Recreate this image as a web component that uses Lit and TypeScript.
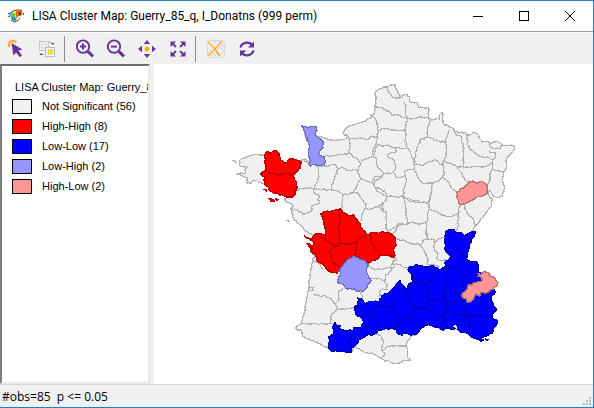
import { LitElement, html, css, svg } from "lit";
import { customElement } from "lit/decorators.js";

type Sheet = "A" | "B" | "C" | "D" | "E" | "F";
type Trace = [Sheet, string];
const ORIGIN: Record<Sheet, [number, number]> = {
  A: [675, 225],
  B: [1110, 225],
  C: [855, 600],
  D: [1170, 600],
  E: [855, 420],
  F: [1170, 420],
};

function points([sheet, text]: Trace): number[][] {
  const n = text.trim().split(/\s+/).map(Number);
  const [ox, oy] = ORIGIN[sheet];
  const out: number[][] = [];
  for (let i = 0; i + 1 < n.length; i += 2) out.push([ox + n[i], oy + n[i + 1]]);
  return out;
}

function wobble(a: number, b: number): number {
  const v = Math.sin(a * 12.9898 + b * 78.233) * 43758.5453;
  return (v - Math.floor(v) - 0.5) * 5;
}

/* Breaks long straight runs into the small steps of a surveyed border. */
function path(traces: Trace[], closed: boolean): string {
  const p = traces.flatMap(points);
  if (closed) p.push(p[0]);
  let d = `M${p[0][0]} ${p[0][1]}`;
  for (let i = 1; i < p.length; i++) {
    const [x0, y0] = p[i - 1];
    const [x1, y1] = p[i];
    const steps = Math.max(1, Math.round(Math.hypot(x1 - x0, y1 - y0) / 6));
    for (let k = 1; k < steps; k++) {
      const x = Math.round(x0 + ((x1 - x0) * k) / steps);
      const y = Math.round(y0 + ((y1 - y0) * k) / steps);
      d += `L${(x + wobble(x, y)).toFixed(1)} ${(y + wobble(y, x)).toFixed(1)}`;
    }
    d += `L${x1} ${y1}`;
  }
  return closed ? d + "Z" : d;
}

const lines = (sheet: Sheet, list: string[]): string =>
  list.map((t) => path([[sheet, t]], false)).join("");

const OUTLINE = path(
  [
    ["B", "75 28 78 40 84 52 90 62 86 70 96 68 104 58 112 58 118 66 120 80 132 84 142 84 146 98 162 99 174 97 178 104 176 112 176 124 178 130 188 135 208 132 209 118 216 113 220 120 218 134 222 150 236 154 250 160 256 170 266 174 284 172 290 178 300 180 310 172 322 177 328 190 338 202 354 198 362 206 382 200 398 210 412 212 426 210 433 217 426 232 416 242 408 260 408 280 400 292 397 310 402 330 402 350 396 364 382 368 368 360 360 346 354 352 358 366 368 374 364 384"],
    ["F", "304 194 294 210 286 222 272 238 268 246 258 256 252 262 248 276"],
    ["D", "256 96 254 106 244 118 238 140 232 160 230 178 246 184 262 188 264 204 264 216 272 220 290 216 300 224 312 234 324 248 322 256 310 266 316 276 304 290 304 300 312 318 320 330 308 342 308 356 322 362 320 376 310 386 308 400 290 408 274 412 262 418 250 414 240 408 226 398 210 396 196 386 186 390 172 384 160 390 148 384 130 380 116 374 100 382 88 392 80 402 64 408 56 420 50 434 52 460 54 474 62 480 40 482 22 490 2 488"],
    ["C", "306 480 300 484 290 474 276 468 262 460 240 458 222 446 206 440 200 456 180 456 160 454 140 454 130 440 120 440 100 430 80 422 62 414 52 408 50 394 32 386 34 380 48 370 52 360 60 320 68 280 72 250 78 210 82 180 90 168 76 154 80 140 88 130 82 112 92 104 70 98 58 90 50 78 38 70 28 60 22 46"],
    ["E", "24 224 18 208 24 200 16 190 4 186 0 176"],
    ["A", "186 368 206 364 190 366 176 362 160 356 144 352 132 344 124 332 118 324 108 322 90 316 82 318 78 326 66 324 66 308 56 304 36 298 48 294 62 296 60 282 68 278 44 270 44 256 50 250 72 244 92 238 104 240 118 242 124 230 134 234 144 228 154 228 162 236 166 248 172 258 180 264 188 258 196 250 206 252 216 256 228 258 238 252 246 262 256 258 252 244 250 226 252 208 246 196 240 180 236 162 230 152 240 154 252 158 262 154 274 156 276 166 270 176 280 190 286 184 300 190 320 194 340 196 358 194 370 184 358 180 354 172 366 158 382 150 402 144 422 138 438 128 446 118"],
    ["B", "14 110 16 90 17 50 28 42 48 36 62 30"],
  ],
  true
);

const BORDERS =
  lines("B", [
    "50 34 56 52 66 66 78 70 92 66",
    "16 96 30 98 44 104 60 112 66 122 82 120 100 128 112 130",
    "100 80 108 92 106 110 112 128",
    "112 130 130 130 150 126 176 128 180 140 172 160 170 186",
    "0 120 12 126 20 140 24 158 26 170 22 186 18 206",
    "26 164 50 160 70 164 90 166 106 162 108 180 104 200 112 216",
    "112 130 108 150 108 162",
    "22 186 10 184 0 186",
    "18 208 40 214 50 210 74 218 90 220 110 218",
    "18 208 10 222 10 240 20 256 22 276 40 292",
    "74 218 78 230 60 234 52 242 60 250 74 256 76 270 72 292",
    "40 292 56 294 72 294 78 306 94 306 106 304 104 290 116 284 130 284 134 272 130 252 122 236 112 218",
    "170 186 150 194 146 210 140 220 136 240 134 264",
    "170 186 190 192 206 200 228 200 232 180 236 166",
    "228 200 230 230 222 258 210 268 196 254 180 260 160 270 152 272 142 268 134 266",
    "222 260 240 264 260 274 280 276",
    "280 274 280 240 282 220 276 204 274 184 260 180 250 164",
    "290 178 292 200 298 222 312 232 330 244 352 246 368 256 376 246 376 234 360 232 358 226",
    "360 206 362 216 376 220 390 220 398 210",
    "262 276 280 276 300 278 320 274 340 276 360 270 368 258 368 282 386 288 398 292",
    "368 282 360 296 360 316 352 330",
    "262 280 272 290 278 304 290 320 300 320",
    "218 262 222 290 218 308 234 320 244 340 262 354",
    "218 308 202 320 190 324 160 326 152 320 140 300 132 284",
    "106 304 110 320 102 340 100 360 104 368 124 374 140 382 160 380 176 382 184 350 188 326",
    "40 292 36 306 16 316 12 330 20 350 36 356 50 364 70 364 84 368 100 360",
    "50 364 48 376 36 394 38 410",
  ]) +
  lines("E", [
    "120 48 140 48 160 44 192 40 196 22 190 -8",
    "190 -8 208 -3 224 -7 242 -1 260 -11 272 -8",
    "98 78 118 80 136 76 152 74 160 88 176 84 192 92 212 88 220 96",
    "192 40 204 50 220 58 228 70 220 84 218 96 224 112 240 122 262 128 268 112 290 108",
    "160 88 150 108 144 130 138 148",
    "98 78 102 110 96 128 88 146",
    "32 152 60 144 88 146 110 148 140 150 160 154 176 164 190 164 206 156 216 136 226 118",
    "48 60 60 58 70 64",
    "88 146 88 160 104 168 98 180 104 190 82 196 80 212 60 222 40 212 22 206",
    "176 164 172 180 170 206",
    "206 156 222 162 232 180 244 192 240 206 232 220 228 244",
    "240 206 256 208 272 200 290 206 304 216 304 250 306 278",
    "262 128 270 142 290 148 302 158 306 172 300 184 280 198 272 202",
    "228 60 248 56 264 50 272 24 280 12",
    "306 280 318 270 330 262 346 256",
  ]) +
  lines("F", [
    "36 170 46 174 60 184 80 182 96 188 116 188",
    "40 172 46 190 48 220 54 248",
    "116 188 118 206 112 220 114 236 108 246 90 252 70 246 54 252 34 252 20 256 14 276 0 282",
    "116 188 120 170 126 150",
    "118 206 136 214 154 226 174 230 196 224 206 220 206 204 214 194",
    "206 222 204 240 204 260 200 272",
    "222 194 228 210 236 226 248 234 252 252 262 254",
    "108 248 110 260 108 284 112 298 100 300",
  ]) +
  lines("D", [
    "20 116 40 120 60 130 88 134 100 148 108 160 114 178 112 194",
    "112 100 112 116 100 118 96 132 88 136",
    "14 166 20 180 8 186 14 200 0 206",
    "14 190 40 202 56 202",
    "112 116 130 118 136 126 156 112 164 112",
    "132 124 134 150 144 160 140 176 156 182 176 180",
    "110 194 136 196 150 200",
    "50 436 30 438 6 438",
  ]) +
  lines("C", [
    "250 200 270 208 300 206 320 196 328 180 326 166",
    "258 236 280 236 300 240 302 224 316 214 320 200",
    "284 290 282 276 292 266 306 268 300 240",
    "228 276 232 296",
    "82 180 100 188 112 206",
    "84 282 106 290 120 286 140 300 152 310 162 300 160 280 174 264",
    "72 262 84 262 84 272 70 272",
    "152 310 158 328 140 340 138 370 120 372 50 372",
    "158 328 184 326 206 324",
    "138 370 150 372",
    "270 400 290 410 296 430 290 450 300 460 288 474",
    "290 452 310 440 330 438",
  ]);

interface Cluster {
  kind: string;
  area: string;
  seams: string;
}

const CLUSTERS: Cluster[] = [
  {
    kind: "hh",
    area:
      path([["A", "118 242 124 230 134 234 144 228 154 228 162 236 166 248 172 258 180 264 188 258 196 250 206 252 216 256 228 260 226 280 214 290 206 300 208 310 214 320 216 340 210 358 206 364 190 366 176 362 160 356 144 352 132 344 124 332 118 320 120 308 108 300 108 294 120 290 122 270"]], true) +
      path([["A", "132 370 140 372 148 378 138 380"]], true) +
      path([["A", "151 371 160 374 156 378"]], true) +
      path([["A", "117 343 124 343 124 348"]], true) +
      path([["C", "106 42 120 36 140 32 152 30 166 26 172 36 184 40 190 48 206 44 212 56 222 68 230 84 242 96 244 104 256 98 280 100 296 96 316 100 330 112 334 136 324 150 330 166 320 172 306 166 286 166 268 180 250 190 240 180 230 178 222 170 206 168 198 176 182 180 172 200 160 214 156 222 140 218 124 206 110 190 94 178 90 162 76 154 80 140 88 130 82 112 92 100 104 102 120 106 120 80 116 64"]], true) +
      path([["C", "58 108 68 112 82 118 78 122 64 114"]], true) +
      path([["C", "66 130 76 134 84 148 74 142"]], true),
    seams:
      lines("A", ["120 290 140 296 160 300 180 296 196 300 206 304"]) +
      lines("C", [
        "162 30 166 60 160 80 162 110 168 130 150 140 132 126 112 112",
        "168 130 190 132 216 128 220 114 242 104",
        "150 138 134 154 138 170 140 186 160 196 168 206",
        "256 98 256 120 262 134 276 150 286 164",
        "216 128 214 144 206 168",
      ]),
  },
  {
    kind: "ll",
    area:
      path(
        [
          ["D", "166 96 176 88 190 88 196 96 210 96 224 106 240 98 248 94 256 96 254 106 244 118 238 140 232 160 230 178 246 184 262 188 264 204 264 216 276 222 290 240 304 262 316 276 304 290 304 300 312 318 320 330 308 342 308 356 322 362 320 376 310 386 308 400 290 408 274 412 262 418 250 414 240 408 226 398 210 396 202 388 204 378 196 374 184 378 196 386 186 390 172 384 160 390 148 384 130 380 116 374 100 382 88 392 80 402 64 406 44 400 36 406 20 398 18 388 0 386"],
          ["C", "300 386 280 392 270 402 250 404 240 410 222 420 214 432 200 444 200 456 180 456 160 454 140 454 130 438 134 424 132 410 148 398 144 380 150 366 156 376 166 378 166 390 184 392 200 392 206 384 222 384 236 368 228 352 214 346 208 322 220 314 218 294 230 296 238 310 260 304 284 306 290 288 306 280 326 262 334 252 345 242"],
          ["D", "42 262 50 266 58 250 70 248 66 236 66 222 54 208 60 200 80 194 100 200 130 198 150 208 166 198 166 184 176 180 184 170 166 150 164 120"],
        ],
        true
      ) +
      path([["D", "268 417 280 420 272 424"]], true) +
      path([["D", "286 416 296 418 292 422"]], true),
    seams:
      lines("D", [
        "176 178 190 158 206 152 216 158 230 178",
        "150 210 160 202 172 206 190 200 196 210 210 222 220 240 218 260",
        "172 206 166 230 168 260 162 290 166 304",
        "58 250 80 246 100 252 120 248 130 232 150 208",
        "110 252 116 270 108 290 116 300 140 300 166 302",
        "50 266 50 290 64 310 76 328 78 340 64 352 44 356 24 366 18 390",
        "76 328 90 324 110 326 116 298",
        "110 326 124 340 140 348 166 346 170 320 166 304 190 306 214 300",
        "166 346 164 366 150 380",
        "214 300 222 316 232 346",
        "170 320 190 340 230 346 250 350 280 346 310 346",
        "230 346 240 370 236 396",
      ]) +
      lines("C", [
        "284 306 276 320 262 340 270 348 266 360 280 376 270 400",
        "276 320 296 318 320 322 330 340 345 350",
        "232 346 250 340 262 340",
        "192 392 200 410 186 428 200 440",
        "150 390 166 390",
        "330 390 334 374 345 372",
      ]),
  },
  {
    kind: "lh",
    area:
      path([["A", "230 152 240 154 252 158 262 154 274 156 276 166 270 176 280 190 296 202 294 218 284 228 280 240 298 246 302 258 298 270 280 272 268 268 256 274 250 268 258 258 252 244 250 226 252 208 246 196 240 180 236 162"]], true) +
      path([["C", "172 200 184 182 198 176 206 168 214 172 224 178 240 182 250 194 244 210 250 226 258 240 248 256 238 272 220 274 208 266 188 268 174 254 158 248 160 230 168 222 160 214"]], true),
    seams: "",
  },
  {
    kind: "hl",
    area:
      path([["F", "200 160 210 148 220 144 236 128 248 122 262 130 272 124 286 130 292 138 292 160 280 166 262 170 250 178 236 186 220 192 210 194 204 180 200 172"]], true) +
      path([["D", "264 220 272 224 284 214 294 218 298 228 312 232 324 248 322 256 310 268 298 274 286 280 272 278 268 288 256 282 248 300 240 306 232 306 228 296 216 290 216 282 228 272 232 260 248 250 262 246 276 242 276 234 264 230"]], true),
    seams: "",
  },
];

const ISLETS = path([["A", "22 256 28 256 34 264"]], false) + path([["C", "3 61 14 65"]], false);

@customElement("cluster-map")
class ClusterMap extends LitElement {
  static styles = css`
    :host {
      display: block;
      background: #fff;
      min-width: 0;
      overflow: hidden;
    }
    svg {
      display: block;
      width: 100%;
      height: 100%;
    }
    path {
      stroke-width: 3.8;
      stroke-linejoin: round;
    }
    .land {
      fill: #f0f0f0;
      stroke: #b2b2b2;
    }
    .line {
      fill: none;
      stroke: #b2b2b2;
    }
    .hh {
      fill: #ff0000;
      stroke: #b40000;
    }
    .ll {
      fill: #0000ff;
      stroke: #0000b4;
    }
    .lh {
      fill: #9696ff;
      stroke: #6c6cb8;
    }
    .hl {
      fill: #ff9696;
      stroke: #b86c6c;
    }
    path.seam {
      fill: none;
    }
  `;
  render() {
    return html`<svg viewBox="462 192 1317 960" role="img" aria-label="Cluster map of France" shape-rendering="crispEdges">
      <path class="land" d=${OUTLINE} />
      <path class="line" d=${BORDERS + ISLETS} />
      ${CLUSTERS.map((c) => svg`<path class=${c.kind} d=${c.area} /><path class="seam ${c.kind}" d=${c.seams} />`)}
    </svg>`;
  }
}

const icon = (body: unknown) => html`<svg width="20" height="20" viewBox="0 0 20 20" aria-hidden="true">${body}</svg>`;

const TOOLS = [
  [
    {
      label: "Select",
      art: svg`<path d="M3.5 8A3.8 3.8 0 1 1 10 3.5" fill="none" stroke="#fbb01f" stroke-width="2.2"/>
        <path d="M5.5 4L16.5 10.5L12.3 11.6L16 16.4L13.6 18.2L10.2 13.4L7.4 16.5Z" fill="#663399"/>`,
    },
    {
      label: "Invert selection",
      art: svg`<rect x="2.5" y="2.5" width="9" height="9" fill="#eee" stroke="#c4c4c4"/>
        <path d="M5 5H9V9H5Z" fill="#fff" stroke="#ccc"/>
        <rect x="8.5" y="8.5" width="9" height="9" fill="#f4f4f4" stroke="#bababa"/>
        <path d="M11 10.5H16V14L14 15.5H11Z" fill="#f7e719" stroke="#cfc78c" stroke-width=".6"/>
        <path d="M12.5 3.5H15M4.5 15.5H7" fill="none" stroke="#aaa"/>
        <path d="M14 4H17.5L15.8 6ZM2.5 16H5.8L4 14Z" fill="#663399"/>`,
    },
  ],
  [
    {
      label: "Zoom in",
      art: svg`<circle cx="8" cy="7.6" r="6.2" fill="none" stroke="#663399" stroke-width="1.9"/>
        <path d="M5 7.6H11M8 4.6V10.6" stroke="#663399" stroke-width="2"/><path d="M12.8 12.4L18 17.4" stroke="#663399" stroke-width="3"/>`,
    },
    {
      label: "Zoom out",
      art: svg`<circle cx="8" cy="7.6" r="6.2" fill="none" stroke="#663399" stroke-width="1.9"/>
        <path d="M5 7.6H11" stroke="#663399" stroke-width="2"/><path d="M12.8 12.4L18 17.4" stroke="#663399" stroke-width="3"/>`,
    },
    {
      label: "Pan",
      art: svg`<circle cx="10" cy="10" r="2.5" fill="#fbb01f"/>
        <path d="M10 1L13.2 5H6.8ZM10 19L6.8 15H13.2ZM1 10L5 6.8V13.2ZM19 10L15 13.2V6.8Z" fill="#663399"/>`,
    },
    {
      label: "Full extent",
      art: svg`<path d="M4 4L8 8M16 4L12 8M4 16L8 12M16 16L12 12" stroke="#663399" stroke-width="1.8"/>
        <path d="M2.5 2.5H8L2.5 8ZM17.5 2.5V8L12 2.5ZM2.5 17.5V12L8 17.5ZM17.5 17.5H12L17.5 12Z" fill="#663399"/>`,
    },
  ],
  [
    {
      label: "Base map",
      art: svg`<rect x="1.5" y="1.5" width="17" height="17" rx="3" fill="#f3f1f4" stroke="#d0c6da" stroke-dasharray="2 1"/>
        <path d="M8 2L18 13M12 2L18 8M2 13L7 18M3 10L10 17M18 4L9 13M14 18L9 12M18 12L13 17" fill="none" stroke="#d5ccdf"/>
        <path d="M2 3L9 10L16 2M9 10L14 17M9 10L2 17" fill="none" stroke="#fbb01f" stroke-width="1.4"/>`,
    },
    {
      label: "Refresh",
      art: svg`<path d="M3.5 8.6A6.7 6 0 0 1 15 5.6M16.5 11.4A6.7 6 0 0 1 5 14.4" fill="none" stroke="#663399" stroke-width="2.2"/>
        <path d="M17 2.5V8.5H11ZM3 17.5V11.5H9Z" fill="#663399"/>`,
    },
  ],
];

const LEGEND = [
  ["ns", "Not Significant (56)"],
  ["hh", "High-High (8)"],
  ["ll", "Low-Low (17)"],
  ["lh", "Low-High (2)"],
  ["hl", "High-Low (2)"],
];

@customElement("app-root")
class AppRoot extends LitElement {
  static styles = css`
    :host {
      display: flex;
      flex-direction: column;
      box-sizing: border-box;
      min-height: 100vh;
      border: 1px solid #1f80cc;
      border-left: 0;
      background: #f0f0f0;
      color: #000;
      font: 12px/16px "Open Sans", "Noto Sans", sans-serif;
    }
    button {
      display: flex;
      align-items: center;
      justify-content: center;
      padding: 0;
      border: 0;
      background: none;
    }
    .titlebar {
      display: flex;
      align-items: center;
      height: 30px;
      padding-left: 8px;
      background: #fff;
      border-bottom: 1px solid #9c9c9c;
    }
    h1 {
      flex: 1;
      margin: 0 0 0 8px;
      font: 12px/16px Roboto, "Open Sans", sans-serif;
      white-space: nowrap;
      overflow: hidden;
    }
    .control {
      width: 46px;
      height: 28px;
    }
    .toolbar {
      display: flex;
      align-items: center;
      height: 31px;
      border-top: 1px solid #fff;
    }
    .tool {
      width: 31px;
      height: 30px;
    }
    .divider {
      width: 1px;
      height: 26px;
      margin: 0 4px 0 2px;
      background: #8c8c8c;
    }
    .body {
      flex: 1;
      display: grid;
      grid-template-columns: 150px minmax(0, 1fr);
      column-gap: 4px;
      min-height: 0;
    }
    .legend {
      box-sizing: border-box;
      padding: 12px 0 0 10px;
      background: #fff;
      border: 2px solid;
      border-color: #6e6e6e #e8e8e8 #e8e8e8 #7c7c7c;
      overflow: hidden;
      font: 11px/20px "Liberation Sans", Arial, sans-serif;
      white-space: nowrap;
    }
    h2 {
      margin: 0;
      padding-left: 3px;
      font: inherit;
      line-height: 18px;
    }
    ul {
      margin: 0;
      padding: 0;
      list-style: none;
    }
    li {
      display: flex;
      align-items: center;
      gap: 10px;
      height: 20px;
    }
    .swatch {
      box-sizing: border-box;
      width: 20px;
      height: 15px;
      border: 1px solid #000;
    }
    .ns {
      background: #f0f0f0;
    }
    .hh {
      background: #f00;
    }
    .ll {
      background: #00f;
    }
    .lh {
      background: #9696ff;
    }
    .hl {
      background: #ff9696;
    }
    .status {
      display: flex;
      align-items: center;
      justify-content: space-between;
      box-sizing: border-box;
      height: 23px;
      padding: 2px 2px 0;
      border-top: 1px solid #d7d7d7;
      white-space: pre;
    }
    .grip {
      align-self: flex-end;
      margin-bottom: 2px;
    }
  `;
  render() {
    return html`
      <header class="titlebar">
        <svg width="16" height="16" viewBox="0 0 16 16" aria-hidden="true">
          <path d="M0 6L2 5L5 3L9 2L14 2.5M15.5 5V7M12 10L10 12.5L6 14L3 12M0 8L2 9" fill="none" stroke="#333" stroke-width=".9" />
          <path d="M1 6L4 4V10L2 8Z" fill="#21c3e6" />
          <path d="M3 8L6 9L9 11L7 13L4 12Z" fill="#1684f0" />
          <path d="M4 5L7 4L8 10L5 10Z" fill="#43c62e" />
          <path d="M6 4L9 3V11L7 9Z" fill="#f4dc1e" />
          <path d="M8 2L13 1.5L14.5 5L13 8L10 8L9 11L8 8Z" fill="#e5691b" />
          <path d="M10.5 4H13V7H11Z" fill="#7c3416" />
        </svg>
        <h1>LISA Cluster Map: Guerry_85_q, I_Donatns (999 perm)</h1>
        <button class="control" aria-label="Minimize">
          <svg width="10" height="10"><path d="M0 5.5H10" stroke="#000" /></svg>
        </button>
        <button class="control" aria-label="Maximize">
          <svg width="10" height="10"><rect x=".5" y=".5" width="9" height="9" fill="none" stroke="#000" /></svg>
        </button>
        <button class="control" aria-label="Close">
          <svg width="10" height="10"><path d="M0 0L10 10M10 0L0 10" stroke="#000" /></svg>
        </button>
      </header>
      <nav class="toolbar" aria-label="Map tools">
        ${TOOLS.map(
          (group, i) => html`${i ? html`<span class="divider"></span>` : ""}${group.map(
            (t) => html`<button class="tool" aria-label=${t.label}>${icon(t.art)}</button>`
          )}`
        )}
      </nav>
      <main class="body">
        <section class="legend">
          <h2>LISA Cluster Map: Guerry_85_q, I_Donatns</h2>
          <ul>
            ${LEGEND.map(([kind, label]) => html`<li><span class="swatch ${kind}"></span>${label}</li>`)}
          </ul>
        </section>
        <cluster-map></cluster-map>
      </main>
      <footer class="status">
        <span>#obs=85  p &lt;= 0.05</span>
        <svg class="grip" width="8" height="8" aria-hidden="true">
          <path d="M6 0h2v2h-2zM3 3h2v2h-2zM6 3h2v2h-2zM0 6h2v2h-2zM3 6h2v2h-2zM6 6h2v2h-2z" fill="#b8b8b8" />
        </svg>
      </footer>
    `;
  }
}
